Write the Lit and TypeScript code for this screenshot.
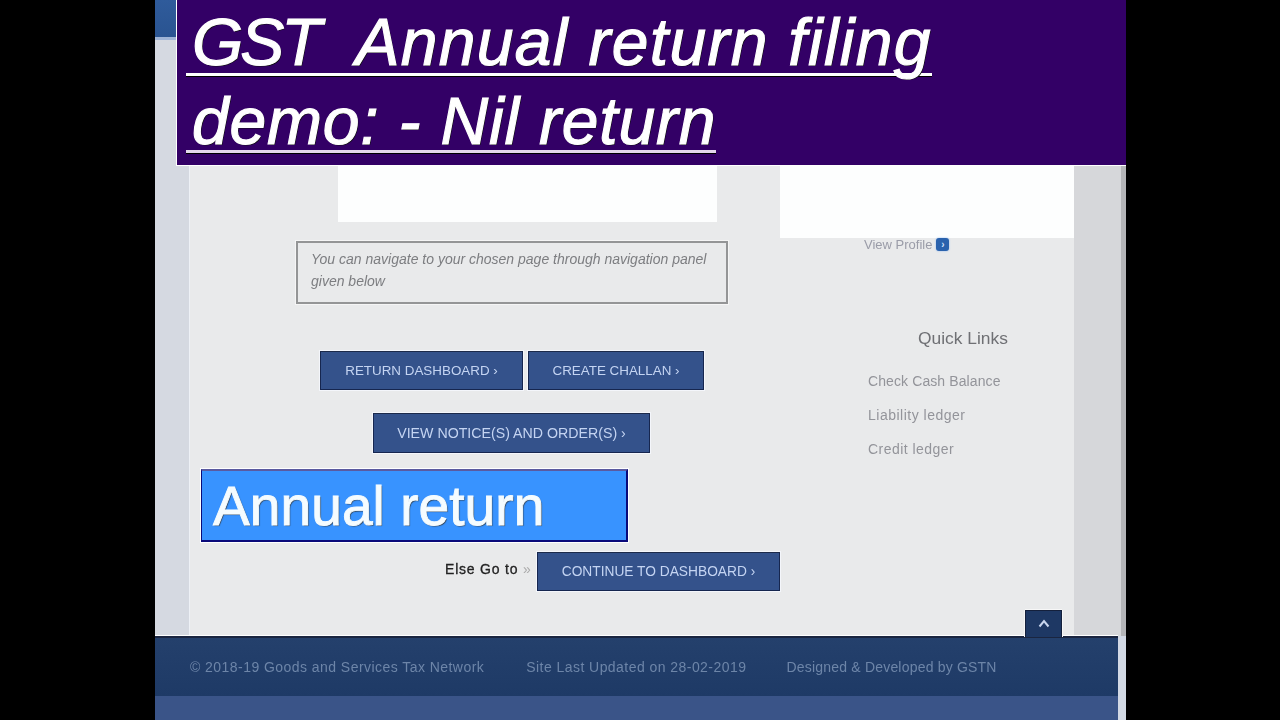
import { LitElement, html, css } from "lit";
import { customElement } from "lit/decorators.js";

@customElement("app-root")
export class AppRoot extends LitElement {
  static styles = css`
    :host { display: block; width: 1280px; height: 720px; background: #000; overflow: hidden; font-family: "Liberation Sans", Arial, sans-serif; }
    .page { position: relative; margin-left: 155px; width: 971px; height: 720px; display: flex; flex-direction: column; background: #d6d8db; }
    .top { height: 636px; display: flex; flex: none; }
    .left { width: 35px; flex: none; background: #d5d9e1; border-right: 1px solid #eef1f6; box-sizing: border-box; }
    .content { width: 884px; flex: none; background: #e9eaeb; display: flex; padding-top: 165px; box-sizing: border-box; }
    .right { flex: 1; display: flex; justify-content: flex-end; background: #d6d7da; }
    .scroll { width: 5px; background: #b4b5b8; }
    .main { width: 590px; flex: none; display: flex; flex-direction: column; align-items: flex-start; }
    .side { width: 294px; flex: none; display: flex; flex-direction: column; }
    .white1 { width: 379px; height: 57px; margin-left: 148px; background: #fdfefe; }
    .notice { width: 432px; height: 63px; margin: 19px 0 0 106px; box-sizing: border-box; border: 2px solid #949596; outline: 1px solid #f5f5f5; padding: 5px 13px; font-style: italic; font-size: 14px; line-height: 22px; color: #7c7d80; }
    .notice span { filter: blur(.6px); display: block; }
    .row { display: flex; gap: 5px; margin: 47px 0 0 130px; }
    .row2 { margin: 23px 0 0 183px; }
    .btn { height: 39px; box-sizing: border-box; background: #34528b; border: 1px solid #16264f; border-top-color: #1c2a4a; outline: 1px solid #f4f6fb; color: #c4d4f2; font-size: 13.4px; display: flex; align-items: center; justify-content: center; white-space: nowrap; }
    .btn span { filter: blur(.6px); }
    .b1 { width: 203px; }
    .b2 { width: 176px; }
    .b3 { width: 277px; height: 40px; font-size: 14.2px; }
    .b4 { width: 243px; font-size: 13.75px; }
    .else { display: flex; align-items: center; gap: 4px; margin: 99px 0 0 255px; }
    .else-label { width: 88px; font-size: 14px; letter-spacing: .8px; color: #222; filter: blur(.3px); white-space: nowrap; -webkit-text-stroke: .3px #222; padding-bottom: 5px; }
    .else-label i { font-style: normal; color: #aaa; -webkit-text-stroke: 0; letter-spacing: 0; }
    .white2 { height: 73px; background: #fdfefe; }
    .profile { display: flex; align-items: center; gap: 4px; margin: -1px 0 0 84px; height: 14px; font-size: 13px; color: #9a9ca8; }
    .profile span { filter: blur(.6px); }
    .dot { width: 13px; height: 13px; border-radius: 3px; background: #2a62ad; color: #cfe0fa; font-size: 10px; line-height: 13px; text-align: center; font-weight: 700; box-shadow: 0 0 2px #8fb8ee; }
    .ql-title { margin: 76px 0 0 138px; font-size: 17.4px; line-height: 22px; color: #6f7074; filter: blur(.6px); }
    .links { display: flex; flex-direction: column; gap: 17px; margin: 24px 0 0 88px; font-size: 14px; line-height: 17px; color: #93949a; filter: blur(.6px); }
    .l1 { letter-spacing: .1px; }
    .l2 { letter-spacing: .5px; }
    .l3 { letter-spacing: .45px; }
    footer { flex: 1; display: flex; flex-direction: column; width: 963px; border-top: 2px solid #1a2540; box-shadow: 0 -1px 0 #fff, 8px 0 0 #d3d9e5; position: relative; }
    .f1 { height: 58px; flex: none; background: linear-gradient(#24406c, #1e3a66); display: flex; align-items: center; padding-left: 35px; font-size: 14px; color: #6d85a8; white-space: nowrap; box-sizing: border-box; }
    .f1 span { filter: blur(.6px); }
    .f1 .c { letter-spacing: .45px; }
    .f1 .m { margin-left: 42px; letter-spacing: .45px; }
    .f1 .d { margin-left: 40px; letter-spacing: .2px; }
    .f2 { flex: 1; background: #3a5488; }
    .up { position: absolute; left: 870px; top: -28px; width: 37px; height: 27px; background: #1e3864; box-sizing: border-box; border: 1px solid #14203c; border-bottom: 0; box-shadow: 0 -1px 0 #f7f7f7, 1px 0 0 #f7f7f7, -1px 0 0 #f7f7f7; display: flex; justify-content: center; padding-top: 8px; }
    .up svg { display: block; }
    .banner { position: absolute; left: 21px; top: 0; width: 950px; height: 166px; box-sizing: border-box; background: #330066; border-left: 1px solid #fff; border-bottom: 1px solid #fff; padding: 0 0 0 9px; color: #fff; font-style: italic; font-size: 66px; text-shadow: 1px 1px 0 #111; -webkit-text-stroke: 1.1px #fff; white-space: pre; }
    .line { width: fit-content; padding-left: 6px; border-bottom: 3px solid #fff; box-shadow: 0 1px 0 #000; }
    .l-a { height: 73px; line-height: 84px; letter-spacing: 1.3px; }
    .l-b { height: 71px; margin-top: 3px; line-height: 84px; letter-spacing: .8px; border-bottom-color: #e4d8ec; }
    .gst { letter-spacing: -3px; }
    .tab { position: absolute; left: 0; top: 0; width: 21px; height: 40px; background: linear-gradient(#2f5b9b, #2a5491); border-bottom: 3px solid #9fb4d6; box-sizing: border-box; }
    .annual { position: absolute; left: 46px; top: 469px; width: 427px; height: 73px; box-sizing: border-box; background: #3893ff; border: 2px solid #0a0a7a; border-top-color: #5a5aa0; border-left-width: 1px; outline: 1px solid #fff; color: #f5fcff; font-size: 55.2px; line-height: 70px; padding-left: 11px; text-shadow: 1px 1px 1px #345; -webkit-text-stroke: .9px #f5fcff; }
  `;

  render() {
    return html`
      <div class="page">
        <div class="top">
          <div class="left"></div>
          <div class="content">
            <div class="main">
              <div class="white1"></div>
              <div class="notice"><span>You can navigate to your chosen page through navigation panel given below</span></div>
              <div class="row">
                <div class="btn b1"><span>RETURN DASHBOARD ›</span></div>
                <div class="btn b2"><span>CREATE CHALLAN ›</span></div>
              </div>
              <div class="row row2">
                <div class="btn b3"><span>VIEW NOTICE(S) AND ORDER(S) ›</span></div>
              </div>
              <div class="else">
                <div class="else-label">Else Go to <i>»</i></div>
                <div class="btn b4"><span>CONTINUE TO DASHBOARD ›</span></div>
              </div>
            </div>
            <div class="side">
              <div class="white2"></div>
              <div class="profile"><span>View Profile</span><div class="dot">›</div></div>
              <div class="ql-title">Quick Links</div>
              <div class="links">
                <div class="l1">Check Cash Balance</div>
                <div class="l2">Liability ledger</div>
                <div class="l3">Credit ledger</div>
              </div>
            </div>
          </div>
          <div class="right"><div class="scroll"></div></div>
        </div>
        <footer>
          <div class="up">
            <svg width="12" height="9" viewBox="0 0 12 9"><path d="M1.5 7.5 6 2l4.5 5.5" fill="none" stroke="#c9d6ee" stroke-width="2"/></svg>
          </div>
          <div class="f1">
            <span class="c">© 2018-19 Goods and Services Tax Network</span>
            <span class="m">Site Last Updated on 28-02-2019</span>
            <span class="d">Designed &amp; Developed by GSTN</span>
          </div>
          <div class="f2"></div>
        </footer>
        <div class="tab"></div>
        <div class="banner"><div class="line l-a"><span class="gst">GST</span>  Annual return filing</div><div class="line l-b">demo: - Nil return</div></div>
        <div class="annual">Annual return</div>
      </div>
    `;
  }
}
